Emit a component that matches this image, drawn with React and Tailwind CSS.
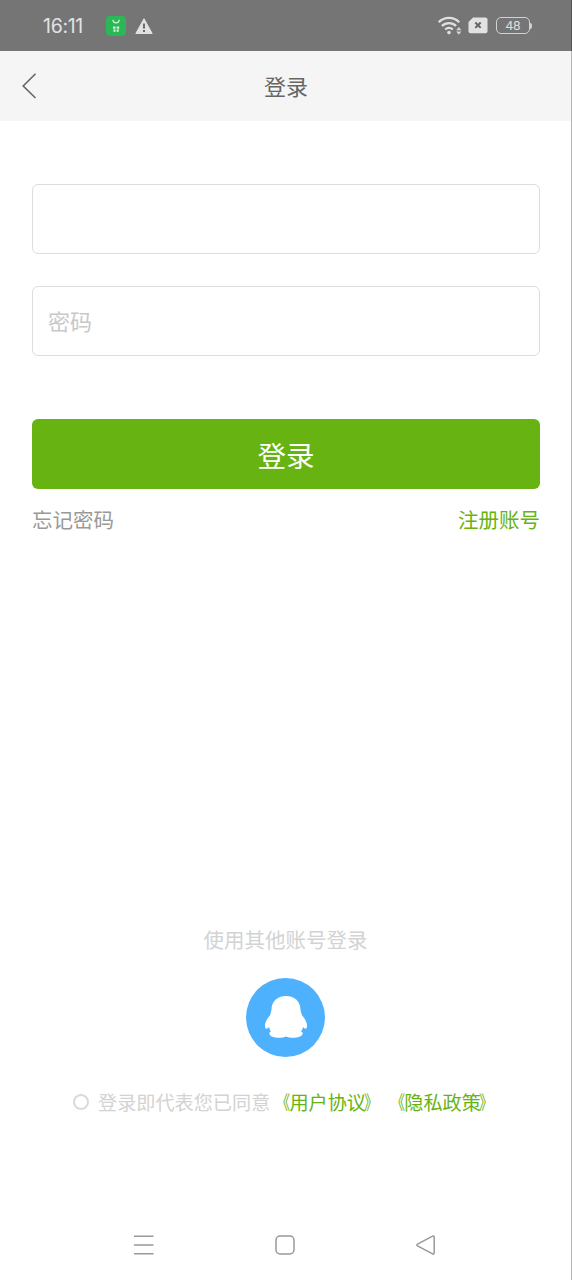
import React, { useState } from 'react'

function StatusBar() {
    return (
        <div className='h-[51px] shrink-0 bg-[#757575] flex items-center justify-between pl-[43px] pr-[40px]'>
            <div className='flex items-center'>
                <span className='w-[63px] font-["Inter",sans-serif] text-[19.5px] leading-[24px] tracking-[-0.3px] text-[#e2e2e2] pt-px'>16:11</span>
                <svg width="20" height="20" viewBox="0 0 20 20" className='mr-[9px]'>
                    <rect width="20" height="20" rx="4" fill="#2cb757" />
                    <path d="M7 3.8a3.1 3.1 0 0 0 6.2 0" fill="none" stroke="#d8f5df" strokeWidth="1.2" />
                    <path d="M7 10.6h2.5v2.2H7zM10.7 10.6h2.5v2.2h-2.5zM7.5 13.4h2v2.4h-2zM10.7 13.4h2v2.4h-2z" fill="#d8f5df" />
                </svg>
                <svg width="18" height="17" viewBox="0 0 18 17" className='mt-[1px]'>
                    <path d="M9 .8 17.2 15.5H.8z" fill="#e2e2e2" stroke="#e2e2e2" strokeLinejoin="round" />
                    <path d="M9 5.5v5M9 12v2" stroke="#6b6b6b" strokeWidth="2" />
                </svg>
            </div>
            <div className='flex items-center'>
                <svg width="24" height="20" viewBox="0 0 24 20" className='mr-[6px]'>
                    <g fill="none" stroke="#e0e0e0" strokeWidth="2.3">
                        <path d="M.8 6.2a14.3 14.3 0 0 1 20.4 0" />
                        <path d="M3.9 10a10 10 0 0 1 14.2 0" />
                        <path d="M7.2 13.5a5.4 5.4 0 0 1 7.6 0" />
                    </g>
                    <circle cx="11" cy="16.6" r="1.8" fill="#e0e0e0" />
                    <path d="m20.8 11 2.6 3.2h-5.2zM20.8 18.8l2.6-3.2h-5.2z" fill="#d6d6d6" />
                </svg>
                <svg width="20" height="17" viewBox="0 0 20 17" className='mr-[8px]'>
                    <path d="M5 .5h12.5a2 2 0 0 1 2 2v11.8a2 2 0 0 1-2 2h-15a2 2 0 0 1-2-2V5z" fill="#e2e2e2" />
                    <path d="m7.3 5.5 5.4 5.4m0-5.4-5.4 5.4" stroke="#666" strokeWidth="2" />
                </svg>
                <div className='w-[34px] h-[17px] rounded-[5px] border-[1.5px] border-[#d2d2d2] flex items-center justify-center font-["Roboto",sans-serif] text-[13.5px] leading-none text-[#dcdcdc]'>48</div>
                <div className='w-[2px] h-[6px] bg-[#d2d2d2] rounded-r-sm'></div>
            </div>
        </div>
    )
}

function Header() {
    return (
        <div className='h-[70px] shrink-0 bg-[#f5f5f5] grid grid-cols-3 items-center pl-[22px] pr-[22px]'>
            <svg width="15" height="26" viewBox="0 0 15 26" fill="none" stroke="#666" strokeWidth="1.6">
                <path d="M13.5 .8 1.2 13l12.3 12" />
            </svg>
            <h1 className='text-center text-[22px] leading-[32px] text-[#666] pb-[2px]'>登录</h1>
        </div>
    )
}

function AgreementLink({ text }) {
    return (
        <a className='text-[#67b311]'>
            <span className='inline-block origin-right scale-x-75 translate-x-px'>《</span>
            {text}
            <span className='inline-block origin-left scale-x-75 -translate-x-[2px]'>》</span>
        </a>
    )
}

function NavBar() {
    return (
        <div className='h-[70px] shrink-0 flex items-center justify-between pl-[133px] pr-[136px]'>
            <svg width="21" height="22" viewBox="0 0 21 22" stroke="#999" strokeWidth="1.6">
                <path d="M1 2.3h19.5M1 11h19.5M1 19.7h19.5" />
            </svg>
            <svg width="20" height="20" viewBox="0 0 20 20" fill="none" stroke="#999" strokeWidth="1.5">
                <rect x="1" y="1" width="18" height="18" rx="4.2" />
            </svg>
            <svg width="20" height="20" viewBox="0 0 20 20" fill="none" stroke="#999" strokeWidth="1.5" strokeLinejoin="round">
                <path d="M1.5 9.1 16.6 1.2q1.6-.6 1.6 1.1v15.4q0 1.7-1.6 1.1L1.5 10.9q-1.3-.9 0-1.8z" />
            </svg>
        </div>
    )
}

function App() {
    const [form, setForm] = useState({
        userName: '',
        password: '',
    })
    const [agreed, setAgreed] = useState(false)
    const onInputChange = (e) => {
        const { name, value } = e.target;
        setForm((prev) => ({ ...prev, [name]: value }))
    }
    return (
        <div className='relative w-full h-[1280px] overflow-hidden bg-white flex flex-col font-["Noto_Sans_CJK_SC",sans-serif]'>
            <StatusBar />
            <Header />
            <form onSubmit={(e) => e.preventDefault()} className='flex flex-col px-8 pt-[63px]'>
                <input
                    type="text"
                    name="userName"
                    value={form.userName}
                    onChange={onInputChange}
                    className='h-[70px] mb-8 px-[15px] border border-[#ddd] rounded-md text-[22px] outline-none'
                />
                <input
                    type="password"
                    name="password"
                    placeholder='密码'
                    value={form.password}
                    onChange={onInputChange}
                    className='h-[70px] px-[15px] pb-[3px] border border-[#ddd] rounded-md text-[22px] outline-none placeholder:text-[#c8c8c8]'
                />
                <button type="submit" className='mt-[63px] h-[70px] rounded-md bg-[#67b311] text-white text-[28.5px] leading-[40px] pt-px'>登录</button>
                <div className='mt-[15px] flex justify-between text-[20.5px] leading-[30px]'>
                    <a className='text-[#999]'>忘记密码</a>
                    <a className='text-[#67b311]'>注册账号</a>
                </div>
            </form>
            <div className='flex-1'></div>
            <div className='flex flex-col items-center pr-px'>
                <p className='text-[20.5px] leading-[30px] text-[#d3d3d3]'>使用其他账号登录</p>
                <button type="button" className='mt-6 w-[79px] h-[79px] rounded-full bg-[#4eb1fd] flex items-center justify-center pb-[2px]'>
                    <svg width="42" height="42" viewBox="0 0 42 42" fill="#fff">
                        <path d="M21 0C12 0 6.800 5.500 6.500 13.500c-.1 1.500-.6 2.500-.8 3.500-.2 1-.3 1.700-.8 2.600C2 22.500 0 26.500 0 29.500c0 2.500.8 3.700 1.800 3.200.9-.4 1.500-1 2.200-1.700.2 1.800.9 3.100 2 4.300-1.300.6-1.900 1.600-1.500 2.900 1.200 4 12.300 4.200 16.500 2.200 4.200 2 15.300 1.800 16.500-2.200.4-1.300-.2-2.300-1.500-2.900 1.100-1.200 1.800-2.500 2-4.300.7.700 1.300 1.300 2.200 1.700 1 .5 1.800-.7 1.800-3.200 0-3-2-7-4.900-9.900-.5-.9-.6-1.600-.8-2.600-.2-1-.7-2-.8-3.500C35.200 5.500 30 0 21 0z" />
                    </svg>
                </button>
            </div>
            <div className='mt-[30px] mb-[93px] h-[30px] flex items-center pl-[73px] text-[19.15px] leading-[30px] whitespace-nowrap'>
                <button
                    type="button"
                    aria-pressed={agreed}
                    onClick={() => setAgreed(!agreed)}
                    className='w-4 h-4 mr-[9px] border-2 border-[#dadada] rounded-full'
                ></button>
                <span className='text-[#d3d3d3]'>登录即代表您已同意</span>
                <AgreementLink text='用户协议' />
                <AgreementLink text='隐私政策' />
            </div>
            <NavBar />
            {/* screen edge */}
            <div className='absolute right-0 top-0 w-px h-full bg-[#b5b5b5]'></div>
            <div className='absolute right-0 top-0 w-px h-[51px] bg-[#555]'></div>
        </div>
    )
}

export default App
